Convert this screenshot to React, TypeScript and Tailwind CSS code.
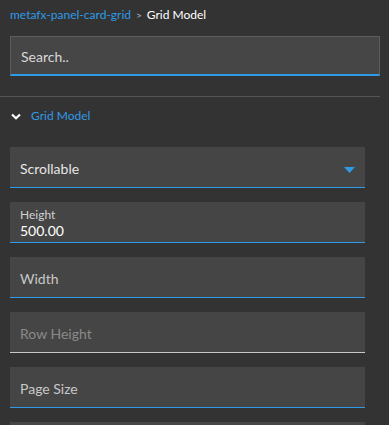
import React from "react";

type Field = {
    label: string;
    value?: string;
    disabled?: boolean;
    select?: boolean;
};

const fields: Field[] = [
    { label: "Scrollable", select: true },
    { label: "Height", value: "500.00" },
    { label: "Width" },
    { label: "Row Height", disabled: true },
    { label: "Page Size" },
    { label: "" },
];

function FieldBox({ field }: { field: Field }) {
    const border = field.disabled ? "border-[#c8c8c8]" : "border-[#2f9ae6]";
    return (
        <div
            className={`relative h-[41px] w-[355px] shrink-0 bg-[#454545] border-b ${border} px-[10px] pt-[3px] flex flex-col justify-center`}
        >
            {field.value ? (
                <>
                    <span className="text-[12px] leading-[14px] text-[#d2d2d2]">{field.label}</span>
                    <span className="text-[14px] leading-[17px] text-white">{field.value}</span>
                </>
            ) : field.label ? (
                <span
                    className={`text-[14px] leading-[17px] ${
                        field.disabled ? "text-[#8a8a8a]" : field.select ? "text-[#e6e6e6]" : "text-[#c8c8c8]"
                    }`}
                >
                    {field.label}
                </span>
            ) : null}
            {field.select && (
                <svg className="absolute right-[10px] top-[20px]" width="11" height="6" viewBox="0 0 11 6">
                    <path d="M0 0 H11 L5.5 6 Z" fill="#2f9ae6" />
                </svg>
            )}
        </div>
    );
}

export default function App() {
    return (
        <main
            className="w-[389px] h-[425px] overflow-hidden bg-[#333333]"
            style={{ fontFamily: 'Lato, "Noto Sans", sans-serif' }}
        >
            {/* Breadcrumb */}
            <div className="flex items-center h-[30px] pl-[10px] text-[12px] gap-[5px]">
                <span className="text-[#2f9ae6]">metafx-panel-card-grid</span>
                <span className="text-[#bbbbbb] text-[10px]">&gt;</span>
                <span className="text-white">Grid Model</span>
            </div>

            {/* Search */}
            <div className="pl-[10px] pt-[6px]">
                <div className="w-[370px] h-[40px] bg-[#464646] border border-[#5c5c5c] border-b-2 border-b-[#2f9ae6] flex items-center px-[10px] pt-[2px]">
                    <span className="text-[14px] text-[#d8d8d8]">Search..</span>
                </div>
            </div>

            <div className="mt-[20px] w-[380px] h-px bg-[#555555]" />

            {/* Section header */}
            <div className="flex items-center h-[38px] pl-[11px] gap-[10px]">
                <svg width="10" height="7" viewBox="0 0 10 7">
                    <path d="M1 1.5 L5 5.2 L9 1.5" stroke="white" strokeWidth="2.2" fill="none" />
                </svg>
                <span className="text-[12px] text-[#2f9ae6]">Grid Model</span>
            </div>

            <div className="flex flex-col gap-[14px] pl-[10px] pt-[12px]">
                {fields.map((f, i) => (
                    <FieldBox key={i} field={f} />
                ))}
            </div>
        </main>
    );
}
